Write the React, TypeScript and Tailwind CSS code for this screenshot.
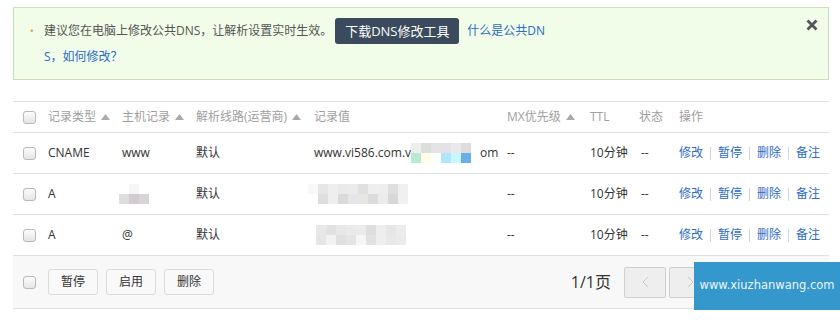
import React from "react";

const font = "font-['Open_Sans','Noto_Sans_CJK_SC',sans-serif]";

function Checkbox() {
  return (
    <span className="block w-[13px] h-[13px] rounded-[3px] border border-[#b9b9b9] bg-gradient-to-b from-[#fdfdfd] to-[#e4e4e4]" />
  );
}

function SortArrow() {
  return (
    <svg width="9" height="6" viewBox="0 0 9 6" className="ml-[5px] inline-block">
      <path d="M0 6 L4.5 0 L9 6 Z" fill="#aaa" />
    </svg>
  );
}

// blurred block, rows of coloured cells
function Mosaic({ rows, offsets = [] }: { rows: string[][]; offsets?: number[] }) {
  return (
    <span className="inline-flex flex-col align-middle shrink-0">
      {rows.map((row, i) => (
        <span key={i} className="flex" style={{ marginLeft: offsets[i] ?? 0 }}>
          {row.map((c, j) => (
            <span key={j} className="block w-[10px] h-[10px]" style={{ background: c }} />
          ))}
        </span>
      ))}
    </span>
  );
}

function Sep() {
  return <span className="block w-[1px] h-[13px] mx-[7px] bg-[#d4d4d4]" />;
}

function Actions() {
  return (
    <div className="flex items-center whitespace-nowrap text-[#2c6bc6]">
      <span className="shrink-0">修改</span>
      <Sep />
      <span className="shrink-0">暂停</span>
      <Sep />
      <span className="shrink-0">删除</span>
      <Sep />
      <span className="shrink-0">备注</span>
    </div>
  );
}

const cols = "grid grid-cols-[35px_74px_74px_118px_193px_83px_49px_40px_1fr] items-center";

const rows = [
  {
    type: "CNAME",
    host: <span>www</span>,
    value: (
      <span className="flex items-center whitespace-nowrap">
        www.vi586.com.v
        <Mosaic
          rows={[
            ["#eeeeee", "#dddddd", "#e4e4e4", "#e6e0e8", "#e9e9e9", "#dddddd"],
            ["#b8ead0", "#fffde6", "#ffffff", "#b0e6fa", "#c8f8ff", "#6aaee8"],
          ]}
        />
        <span className="ml-[9px]">om</span>
      </span>
    ),
  },
  {
    type: "A",
    host: (
      <span className="-ml-[3px] flex">
        <Mosaic rows={[["#f6f6f9"], ["#dddddd", "#d2ccd2", "#d8d4d8"]]} offsets={[10, 0]} />
      </span>
    ),
    value: (
      <span className="-ml-[6px] flex">
        <Mosaic
          rows={[
            ["#f8f8f8", "#e6e6e6", "#eeeeee", "#eaeaea", "#ebebeb", "#e0e0e0", "#eeeeee", "#ededed", "#dedede", "#f0f0f0"],
            ["#dedede", "#eeeeee", "#dadada", "#e6e6ea", "#e6e6e2", "#dcdcdc", "#ececec", "#d8d8d8", "#f0f0f0"],
          ]}
          offsets={[0, 10]}
        />
      </span>
    ),
  },
  {
    type: "A",
    host: <span>@</span>,
    value: (
      <span className="ml-[2px] flex">
        <Mosaic
          rows={[
            ["#e8e8e8", "#e2e2e2", "#e8e8e8", "#eaeaea", "#ebebeb", "#dedede", "#eeeeee", "#e6e6e6", "#ececec"],
            ["#e6e6e6", "#f2f2f2", "#e0e0e0", "#e4e4e4", "#f6f6f6", "#e2e2e2", "#eeeeee", "#e8e8e8", "#ebebeb"],
          ]}
        />
      </span>
    ),
  },
];

export default function App() {
  return (
    <div className={`relative w-[840px] h-[327px] bg-white overflow-hidden text-[12px] ${font}`}>
      <div className="pl-[13px] pr-[11px] pt-[7px]">
        {/* notice */}
        <div className="relative border border-[#c8e0b8] bg-[#f1fde9] pl-[16px] pt-[10px] pb-[9px] text-[12px] leading-[26px]">
          <div className="flex">
            <span className="w-[14px] text-[#e0a020] text-[10px]">•</span>
            <div className="text-[#555]">
              <div className="flex items-center whitespace-nowrap">
                <span>建议您在电脑上修改公共DNS，让解析设置实时生效。</span>
                <span className="ml-[3px] h-[26px] w-[124px] rounded-[3px] bg-[#3b4a5c] text-white text-[13px] flex items-center justify-center">
                  下载DNS修改工具
                </span>
                <span className="ml-[8px] text-[#2c6bc6]">什么是公共DN</span>
              </div>
              <div className="text-[#2c6bc6]">S，如何修改？</div>
            </div>
          </div>
          <svg width="12" height="12" viewBox="0 0 12 12" className="absolute right-[10px] top-[11px]">
            <path d="M1.5 1.5 L10.5 10.5 M10.5 1.5 L1.5 10.5" stroke="#555" strokeWidth="2.8" />
          </svg>
        </div>

        {/* table */}
        <div className="mt-[21px] border-t border-[#e0e0e0]">
          <div className={`${cols} h-[31px] border-b border-[#e0e0e0] text-[#a0a0a0] whitespace-nowrap`}>
            <span className="pl-[10px]"><Checkbox /></span>
            <span className="flex items-center">记录类型<SortArrow /></span>
            <span className="flex items-center">主机记录<SortArrow /></span>
            <span className="flex items-center">解析线路(运营商)<SortArrow /></span>
            <span>记录值</span>
            <span className="flex items-center">MX优先级<SortArrow /></span>
            <span>TTL</span>
            <span>状态</span>
            <span>操作</span>
          </div>
          {rows.map((r, i) => (
            <div key={i} className={`${cols} h-[41px] border-b border-[#e0e0e0] text-[#333] whitespace-nowrap`}>
              <span className="pl-[10px]"><Checkbox /></span>
              <span>{r.type}</span>
              <span className="flex">{r.host}</span>
              <span>默认</span>
              <span className="flex">{r.value}</span>
              <span>--</span>
              <span>10分钟</span>
              <span className="pl-[2px]">--</span>
              <Actions />
            </div>
          ))}
          <div className="flex items-center h-[53px] bg-[#f8f8f8] border-b border-[#e0e0e0] text-[#333]">
            <span className="pl-[10px] w-[35px]"><Checkbox /></span>
            <div className="flex gap-[8px]">
              {["暂停", "启用", "删除"].map((t) => (
                <span key={t} className="w-[50px] h-[26px] flex items-center justify-center border border-[#dcdcdc] rounded-[3px] bg-[#f9f9f9]">
                  {t}
                </span>
              ))}
            </div>
            <span className="ml-auto text-[16px] text-[#333]">1/1页</span>
            <div className="ml-[13px] mr-[118px] flex gap-[3px]">
              <span className="w-[42px] h-[31px] flex items-center justify-center border border-[#d0d0d0] rounded-[2px] bg-[#eeeeee]">
                <svg width="7" height="12" viewBox="0 0 7 12"><path d="M6 1 L1 6 L6 11" fill="none" stroke="#c8c8c8" strokeWidth="1" /></svg>
              </span>
              <span className="w-[42px] h-[31px] flex items-center justify-center border border-[#d0d0d0] rounded-[2px] bg-[#eeeeee]">
                <svg width="7" height="12" viewBox="0 0 7 12"><path d="M1 1 L6 6 L1 11" fill="none" stroke="#c8c8c8" strokeWidth="1" /></svg>
              </span>
            </div>
          </div>
        </div>
      </div>

      {/* watermark */}
      <div className="absolute left-[694px] top-[262px] w-[146px] h-[48px] bg-[#3498cc] flex items-center justify-center text-[#eef6fb] text-[11.5px] font-['DejaVu_Sans',sans-serif]">
        www.xiuzhanwang.com
      </div>
    </div>
  );
}
